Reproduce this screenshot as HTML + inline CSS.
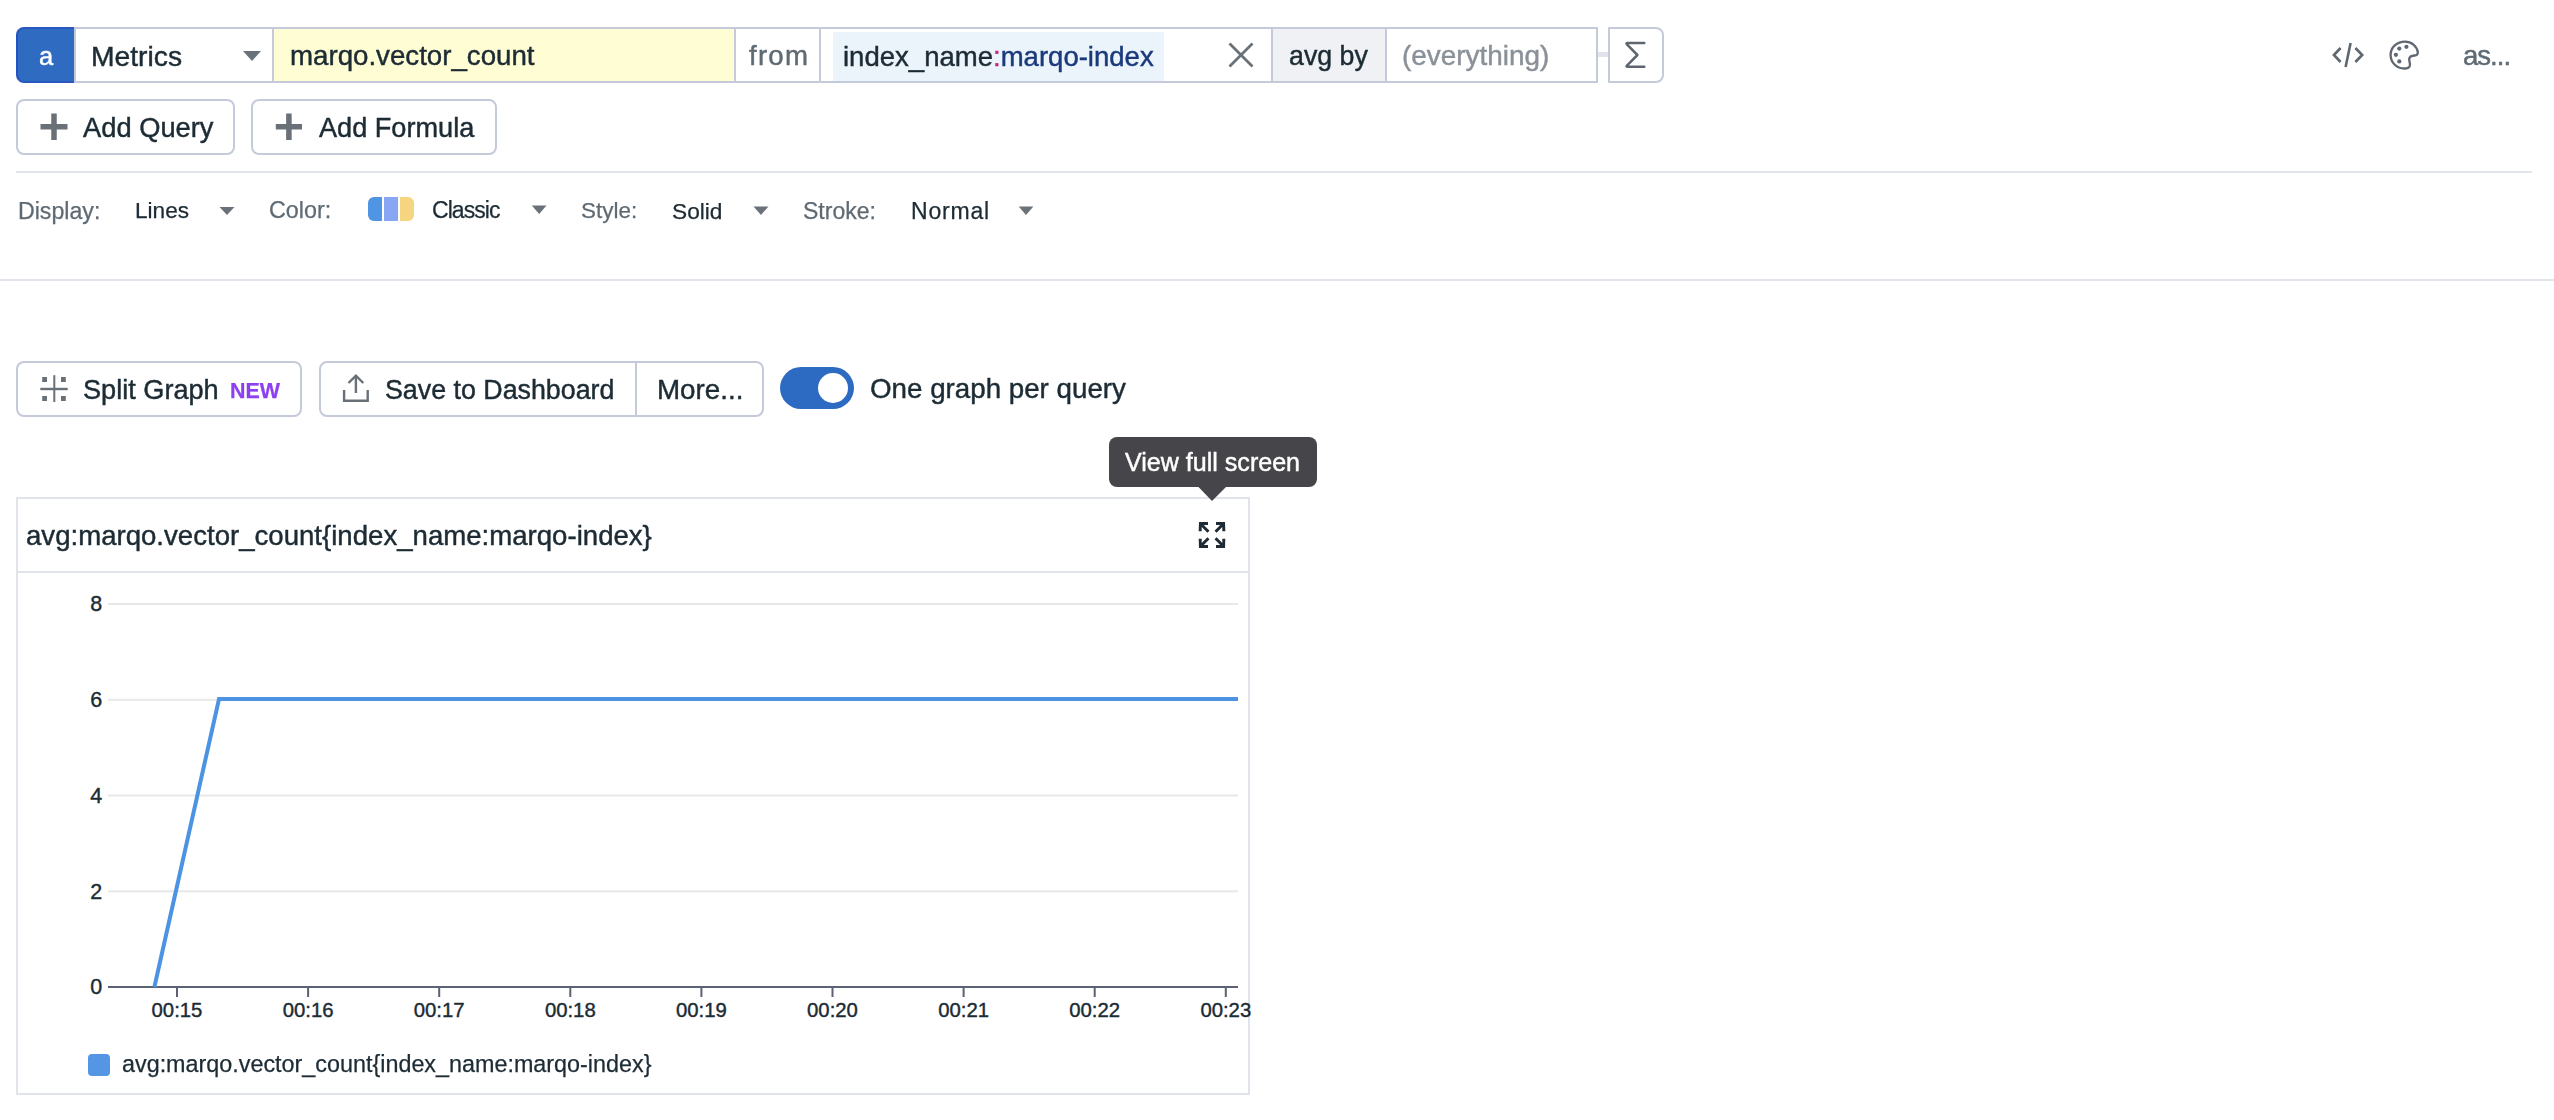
<!DOCTYPE html>
<html><head><meta charset="utf-8"><style>
html,body{margin:0;padding:0;background:#fff;width:2554px;height:1120px;overflow:hidden;position:relative;font-family:"Liberation Sans",sans-serif;}
.t{position:absolute;white-space:nowrap;line-height:normal;font-family:"Liberation Sans",sans-serif;-webkit-text-stroke:0.45px currentColor;will-change:transform;}
.b{position:absolute;box-sizing:border-box;}
svg{position:absolute;left:0;top:0;overflow:visible}
</style></head><body>
<!-- query bar -->
<div class="b" style="left:16px;top:27px;width:58px;height:56px;background:#2f6bc0;border-radius:8px 0 0 8px;border-left:2px solid #2353c0;border-top:2px solid #2757c0;border-bottom:2px solid #2757c0"></div>
<div class="b" style="left:74px;top:27px;width:1524px;height:56px;border:2px solid #c5cadb;background:#fff"></div>
<div class="b" style="left:274px;top:29px;width:460px;height:52px;background:#fffdd3"></div>
<div class="b" style="left:833px;top:32px;width:331px;height:49px;background:#ecf4fb"></div>
<div class="b" style="left:1273px;top:29px;width:111.5px;height:52px;background:#eff1f5"></div>
<div class="b" style="left:272px;top:29px;width:2px;height:52px;background:#c5cadb"></div>
<div class="b" style="left:734px;top:29px;width:2px;height:52px;background:#c5cadb"></div>
<div class="b" style="left:819px;top:29px;width:2px;height:52px;background:#c5cadb"></div>
<div class="b" style="left:1271px;top:29px;width:2px;height:52px;background:#c5cadb"></div>
<div class="b" style="left:1384.5px;top:29px;width:2px;height:52px;background:#c5cadb"></div>
<div class="b" style="left:1598px;top:51.5px;width:10px;height:5px;background:#e0e4ea"></div>
<div class="b" style="left:1608px;top:27px;width:56px;height:56px;border:2px solid #c5cadb;border-radius:0 8px 8px 0"></div>
<!-- buttons row 2 -->
<div class="b" style="left:16px;top:99px;width:219px;height:56px;border:2px solid #c5cadb;border-radius:8px"></div>
<div class="b" style="left:251px;top:99px;width:246px;height:56px;border:2px solid #c5cadb;border-radius:8px"></div>
<!-- separators -->
<div class="b" style="left:16px;top:171px;width:2516px;height:2px;background:#e1e4ea"></div>
<div class="b" style="left:0px;top:279px;width:2554px;height:2px;background:#e1e4ea"></div>
<!-- swatch -->
<div class="b" style="left:368px;top:197px;width:46px;height:24px;border-radius:6px;overflow:hidden">
 <div class="b" style="left:0;top:0;width:14px;height:24px;background:#5094e4"></div>
 <div class="b" style="left:16px;top:0;width:14px;height:24px;background:#88a7f2"></div>
 <div class="b" style="left:32px;top:0;width:14px;height:24px;background:#f6d580"></div>
</div>
<!-- action row -->
<div class="b" style="left:16px;top:361px;width:286px;height:56px;border:2px solid #c5cadb;border-radius:8px"></div>
<div class="b" style="left:318.5px;top:361px;width:445px;height:56px;border:2px solid #c5cadb;border-radius:8px"></div>
<div class="b" style="left:635px;top:363px;width:2px;height:52px;background:#c5cadb"></div>
<div class="b" style="left:780px;top:367px;width:74px;height:42px;border-radius:21px;background:#2d6bc2"></div>
<div class="b" style="left:817.7px;top:372.7px;width:30.6px;height:30.6px;border-radius:50%;background:#fff"></div>
<!-- tooltip -->
<div class="b" style="left:1109px;top:437px;width:207.5px;height:50px;border-radius:8px;background:#46454a"></div>
<!-- graph box -->
<div class="b" style="left:16px;top:497px;width:1234px;height:598px;border:2px solid #e0e3e9"></div>
<div class="b" style="left:18px;top:571px;width:1230px;height:2px;background:#e0e3e9"></div>
<div class="b" style="left:88px;top:1054px;width:22px;height:22px;border-radius:4px;background:#5596e4"></div>

<svg width="2554" height="1120" viewBox="0 0 2554 1120">
 <!-- tooltip arrow -->
 <polygon points="1198,486.5 1226.5,486.5 1212,501" fill="#46454a"/>
 <!-- dropdown triangles -->
 <polygon points="243,51 261,51 252,61" fill="#6b7179"/>
 <polygon points="219.5,207 234.5,207 227,215" fill="#6b7179"/>
 <polygon points="531.8,205.5 546.5,205.5 539.2,214" fill="#6b7179"/>
 <polygon points="753.5,206.5 768.5,206.5 761,215" fill="#6b7179"/>
 <polygon points="1018.7,206.5 1033.4,206.5 1026,215" fill="#6b7179"/>
 <!-- X clear icon -->
 <path d="M1229.5,43.5 L1252.5,66.5 M1252.5,43.5 L1229.5,66.5" stroke="#6a7178" stroke-width="2.8" fill="none"/>
 <!-- sigma -->
 <path d="M1644.3,42.9 H1627.2 Q1626,43.1 1626.7,44.1 L1637.4,55 L1626.7,65.8 Q1626,66.8 1627.5,66.8 H1644.3" stroke="#5f6670" stroke-width="2.5" fill="none" stroke-linejoin="round" stroke-linecap="round"/>
 <!-- code icon -->
 <g stroke="#5f6770" stroke-width="2.6" fill="none">
  <path d="M2340.6,48 L2333.9,55 L2340.6,62"/>
  <path d="M2350.6,43 L2345.6,67"/>
  <path d="M2355.4,48 L2362.2,55 L2355.4,62"/>
 </g>
 <!-- palette icon -->
 <g transform="translate(2389.5,40.5)">
  <path d="M15.5,1.1 C7.5,1.1 1.1,7 1.1,14.3 C1.1,22 7,28 14.8,28 C17.5,28 19.9,27.3 20.4,25 C20.8,22.5 19.5,21 19.7,18.5 C20,16 22.5,15.2 25,15 C27.5,14.8 28.5,13.5 28.3,11.5 C27.3,5.5 22,1.1 15.5,1.1 Z" stroke="#5f6770" stroke-width="2.3" fill="none"/>
  <circle cx="9.8" cy="8.1" r="2.1" fill="#5f6770"/>
  <circle cx="16.9" cy="6.3" r="2.1" fill="#5f6770"/>
  <circle cx="6.4" cy="14.3" r="2.1" fill="#5f6770"/>
  <circle cx="9.8" cy="20.9" r="2.1" fill="#5f6770"/>
 </g>
 <!-- plus icons -->
 <g fill="#6a7078">
  <rect x="40.5" y="124" width="27" height="5.5"/><rect x="51.25" y="113.5" width="5.5" height="26.5"/>
  <rect x="275.8" y="124" width="26.2" height="5.5"/><rect x="286.15" y="113.5" width="5.5" height="26.5"/>
 </g>
 <!-- split graph icon -->
 <g fill="#6a7078">
  <rect x="42.2" y="377" width="4.8" height="5"/><rect x="61" y="377" width="4.8" height="5"/>
  <rect x="42.2" y="396" width="4.8" height="5"/><rect x="61" y="396" width="4.8" height="5"/>
  <rect x="53.3" y="375.2" width="2" height="26.8"/><rect x="40.3" y="387.8" width="27.4" height="2.4"/>
 </g>
 <!-- upload icon -->
 <g stroke="#6a7078" stroke-width="2.4" fill="none">
  <path d="M344.1,390 V400.7 H367.7 V390"/>
  <path d="M355.9,375.5 V393"/>
  <path d="M348.5,383 L355.9,375.6 L363.3,383"/>
 </g>
 <!-- expand icon -->
 <g fill="#1f2b35" stroke="none">
  <path d="M1199,522 h9 v3 h-4.2 l5.7,5.7 -2.1,2.1 -5.7,-5.7 v4.2 h-3 z"/>
  <path d="M1225,522 h-9 v3 h4.2 l-5.7,5.7 2.1,2.1 5.7,-5.7 v4.2 h3 z"/>
  <path d="M1199,548 h9 v-3 h-4.2 l5.7,-5.7 -2.1,-2.1 -5.7,5.7 v-4.2 h-3 z"/>
  <path d="M1225,548 h-9 v-3 h4.2 l-5.7,-5.7 2.1,-2.1 5.7,5.7 v-4.2 h3 z"/>
 </g>
 <!-- chart -->
 <rect x="108" y="603" width="1130" height="2" fill="#e8e8e8"/><rect x="108" y="698.8" width="1130" height="2" fill="#e8e8e8"/><rect x="108" y="794.5" width="1130" height="2" fill="#e8e8e8"/><rect x="108" y="890.3" width="1130" height="2" fill="#e8e8e8"/>
 <rect x="108" y="986" width="1130" height="2" fill="#5b6274"/>
 <rect x="176.0" y="988" width="2" height="9" fill="#5b6274"/><rect x="307.1" y="988" width="2" height="9" fill="#5b6274"/><rect x="438.2" y="988" width="2" height="9" fill="#5b6274"/><rect x="569.3" y="988" width="2" height="9" fill="#5b6274"/><rect x="700.4" y="988" width="2" height="9" fill="#5b6274"/><rect x="831.5" y="988" width="2" height="9" fill="#5b6274"/><rect x="962.6" y="988" width="2" height="9" fill="#5b6274"/><rect x="1093.7" y="988" width="2" height="9" fill="#5b6274"/><rect x="1224.8" y="988" width="2" height="9" fill="#5b6274"/>
 <polyline points="154.4,987 219,699 1238,699" stroke="#4d93e3" stroke-width="4" fill="none" stroke-linejoin="miter"/>
 <g font-family="Liberation Sans" font-size="20.32" fill="#1c2b34" stroke="#1c2b34" stroke-width="0.4"><text x="177.0" y="1017" text-anchor="middle">00:15</text><text x="308.1" y="1017" text-anchor="middle">00:16</text><text x="439.2" y="1017" text-anchor="middle">00:17</text><text x="570.3" y="1017" text-anchor="middle">00:18</text><text x="701.4" y="1017" text-anchor="middle">00:19</text><text x="832.5" y="1017" text-anchor="middle">00:20</text><text x="963.6" y="1017" text-anchor="middle">00:21</text><text x="1094.7" y="1017" text-anchor="middle">00:22</text><text x="1225.8" y="1017" text-anchor="middle">00:23</text></g>
 <g font-family="Liberation Sans" font-size="21.47" fill="#1c2b34" stroke="#1c2b34" stroke-width="0.4"><text x="102.3" y="610.8" text-anchor="end">8</text><text x="102.3" y="706.8" text-anchor="end">6</text><text x="102.3" y="802.8" text-anchor="end">4</text><text x="102.3" y="898.8" text-anchor="end">2</text><text x="102.3" y="994.3" text-anchor="end">0</text></g>
</svg>
<div class="t" style="left:91.29px;top:39.62px;font-size:28.27px;color:#1c2b34;font-weight:400;">Metrics</div><div class="t" style="left:289.77px;top:40.15px;font-size:27.68px;color:#1c2b34;font-weight:400;">marqo.vector_count</div><div class="t" style="left:748.50px;top:40.02px;font-size:27.60px;color:#5f6a73;font-weight:400;letter-spacing:1.243px;">from</div><div class="t" style="left:1289.16px;top:40.78px;font-size:26.76px;color:#1c2b34;font-weight:400;">avg by</div><div class="t" style="left:1401.69px;top:39.76px;font-size:27.89px;color:#8a9198;font-weight:400;">(everything)</div><div class="t" style="left:2462.94px;top:39.82px;font-size:27.60px;color:#5f6a73;font-weight:400;letter-spacing:-1.025px;">as...</div><div class="t" style="left:83.00px;top:112.29px;font-size:27.30px;color:#1c2b34;font-weight:400;">Add Query</div><div class="t" style="left:318.50px;top:112.44px;font-size:27.13px;color:#1c2b34;font-weight:400;">Add Formula</div><div class="t" style="left:17.69px;top:197.53px;font-size:23.17px;color:#5f6a73;font-weight:400;-webkit-text-stroke-width:0.25px;">Display:</div><div class="t" style="left:135.24px;top:198.07px;font-size:22.58px;color:#1c2b34;font-weight:400;-webkit-text-stroke-width:0.25px;">Lines</div><div class="t" style="left:268.91px;top:197.40px;font-size:23.32px;color:#5f6a73;font-weight:400;-webkit-text-stroke-width:0.25px;">Color:</div><div class="t" style="left:432.02px;top:197.19px;font-size:23.00px;color:#1c2b34;font-weight:400;letter-spacing:-0.947px;-webkit-text-stroke-width:0.25px;">Classic</div><div class="t" style="left:581.30px;top:198.15px;font-size:22.48px;color:#5f6a73;font-weight:400;-webkit-text-stroke-width:0.25px;">Style:</div><div class="t" style="left:672.29px;top:197.95px;font-size:22.70px;color:#1c2b34;font-weight:400;-webkit-text-stroke-width:0.25px;">Solid</div><div class="t" style="left:802.68px;top:197.65px;font-size:23.04px;color:#5f6a73;font-weight:400;-webkit-text-stroke-width:0.25px;">Stroke:</div><div class="t" style="left:910.60px;top:197.69px;font-size:23.00px;color:#1c2b34;font-weight:400;letter-spacing:0.798px;-webkit-text-stroke-width:0.25px;">Normal</div><div class="t" style="left:83.15px;top:374.44px;font-size:27.14px;color:#1c2b34;font-weight:400;">Split Graph</div><div class="t" style="left:229.86px;top:379.13px;font-size:21.41px;color:#8d3ff2;font-weight:700;-webkit-text-stroke-width:0.25px;">NEW</div><div class="t" style="left:385.36px;top:374.75px;font-size:26.80px;color:#1c2b34;font-weight:400;">Save to Dashboard</div><div class="t" style="left:656.63px;top:373.88px;font-size:27.76px;color:#1c2b34;font-weight:400;">More...</div><div class="t" style="left:869.70px;top:373.09px;font-size:27.74px;color:#1c2b34;font-weight:400;">One graph per query</div><div class="t" style="left:1124.80px;top:448.31px;font-size:25.07px;color:#ffffff;font-weight:400;">View full screen</div><div class="t" style="left:26.14px;top:519.92px;font-size:27.60px;color:#1c2b34;font-weight:400;">avg:marqo.vector_count{index_name:marqo-index}</div><div class="t" style="left:121.77px;top:1051.37px;font-size:23.35px;color:#1c2b34;font-weight:400;-webkit-text-stroke-width:0.25px;">avg:marqo.vector_count{index_name:marqo-index}</div><div class="t" style="left:38.7px;top:42.2px;font-size:25.5px;color:#fff">a</div><div class="t" style="left:842.78px;top:41.08px;font-size:27.54px;color:#1c2b34">index_name<span style="color:#c0287f">:</span><span style="color:#1b3a7c">marqo-index</span></div>
</body></html>
